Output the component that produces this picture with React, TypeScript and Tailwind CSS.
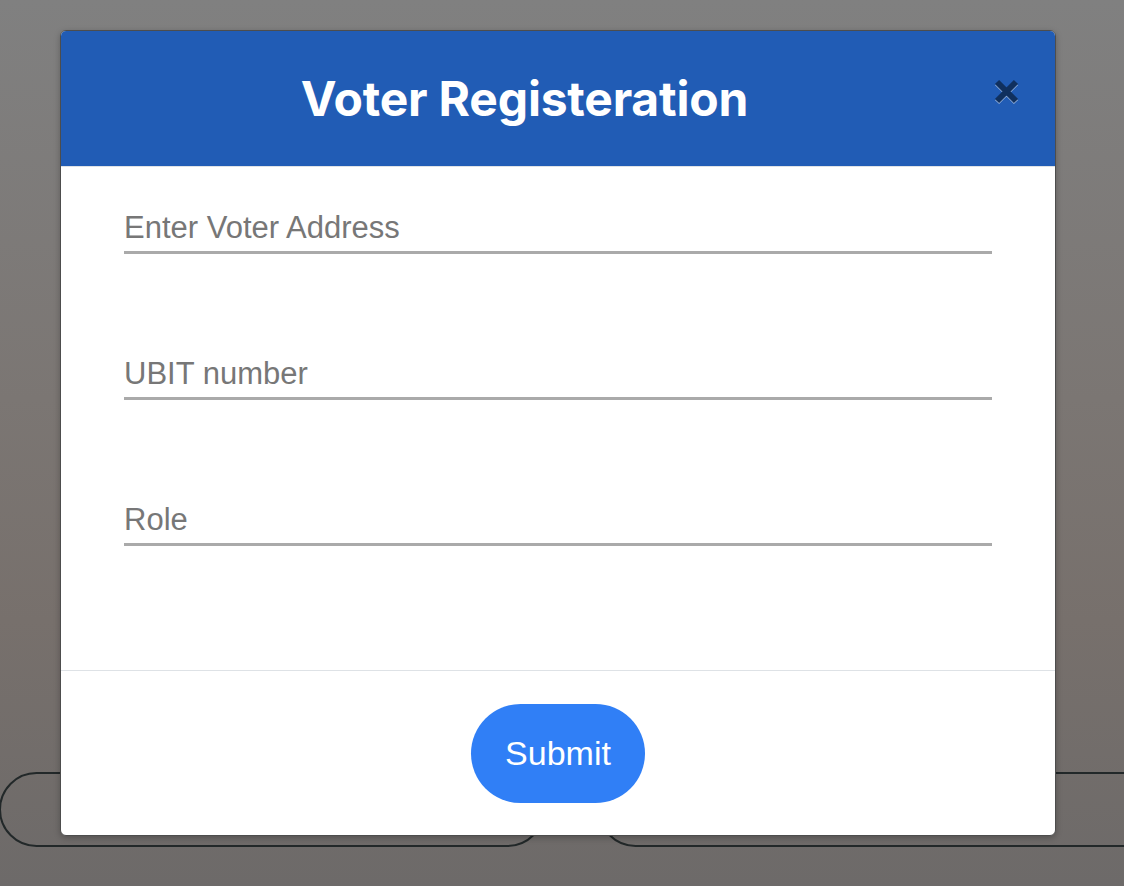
import React from "react";

function CloseIcon() {
  return (
    <svg
      width="27"
      height="25"
      viewBox="0 0 27 25"
      className="[filter:drop-shadow(0_1px_0_rgba(255,255,255,0.55))]"
    >
      <path d="M4 3 L23 22 M23 3 L4 22" stroke="#10305e" strokeWidth="6" strokeLinecap="butt" fill="none" />
    </svg>
  );
}

function Field({ placeholder }: { placeholder: string }) {
  return (
    <input
      type="text"
      placeholder={placeholder}
      className="block w-full h-[50px] border-0 border-b-[3px] border-[#aaaaaa] bg-transparent px-0 text-[31px] text-[#444] placeholder:text-[#777777] outline-none font-['Liberation_Sans',Arial,sans-serif]"
    />
  );
}

export default function App() {
  return (
    <div className="relative h-[886px] w-[1124px] overflow-hidden bg-[linear-gradient(180deg,#808080_0%,#7b7673_45%,#77706c_70%,#6d6a69_100%)] font-['Liberation_Sans',Arial,sans-serif]">
      {/* page content behind overlay */}
      <div className="flex pt-[772px]">
        <div className="ml-[-1px] h-[75px] w-[546px] shrink-0 rounded-[38px] border-2 border-[#222829]" />
        <div className="ml-[53px] h-[75px] w-[600px] shrink-0 rounded-[38px] border-2 border-[#222829]" />
      </div>

      {/* modal */}
      <div className="absolute inset-0 flex justify-start pl-[60px] pt-[30px]">
        <div className="flex h-[806px] w-[996px] flex-col overflow-hidden rounded-[6px] border border-[#4d4d4d] bg-white shadow-[0_2px_6px_rgba(0,0,0,0.25)]">
          <div className="flex h-[136px] shrink-0 items-center border-b border-[#dee2e6] bg-[#215cb5] pr-[35px]">
            <h1 className="flex-1 text-center text-[48px] font-bold leading-none text-white font-['Inter',sans-serif] tracking-[-0.2px]">
              Voter Registeration
            </h1>
            <button className="ml-[5px] mb-[14px] flex h-[25px] w-[27px] items-center justify-center">
              <CloseIcon />
            </button>
          </div>
          <div className="flex flex-1 flex-col gap-[96px] border-b border-[#dee2e6] px-[63px] pt-[37px]">
            <Field placeholder="Enter Voter Address" />
            <Field placeholder="UBIT number" />
            <Field placeholder="Role" />
          </div>
          <div className="flex h-[164px] shrink-0 items-start justify-center pt-[33px]">
            <button className="flex h-[99px] w-[174px] items-center justify-center rounded-full bg-[#307ff6] text-[34px] text-white font-['Liberation_Sans',Arial,sans-serif]">
              Submit
            </button>
          </div>
        </div>
      </div>
    </div>
  );
}
